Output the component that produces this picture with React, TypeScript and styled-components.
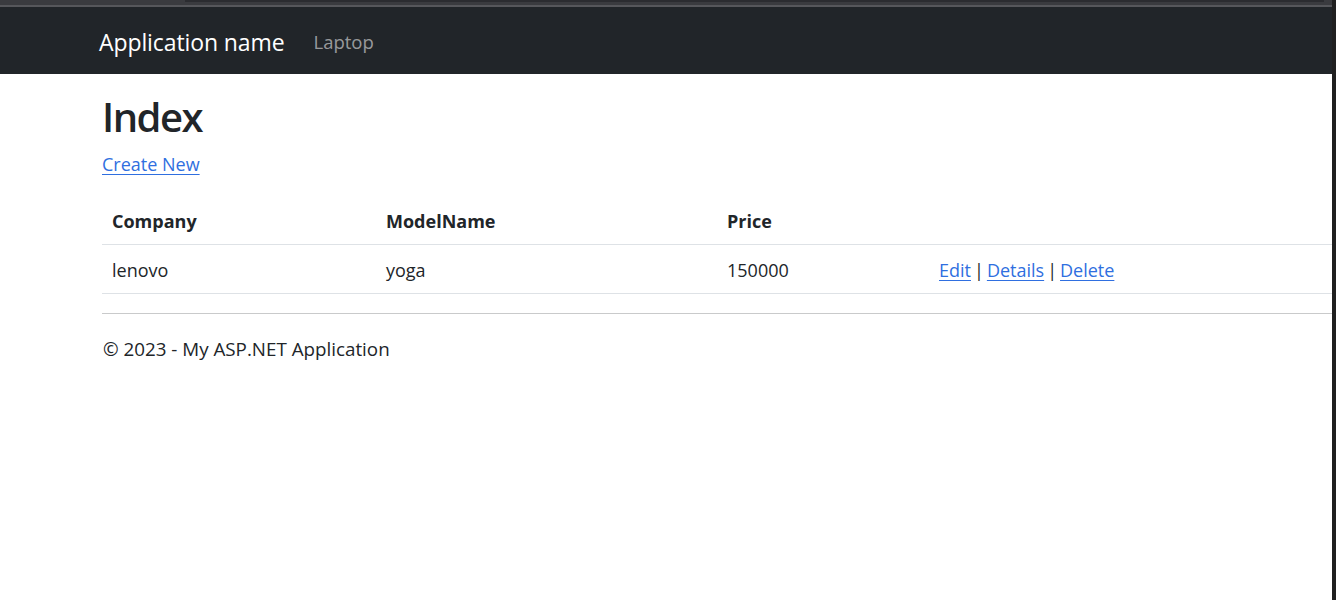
import React from "react";
import styled, { createGlobalStyle } from "styled-components";

const Global = createGlobalStyle`
  html, body { margin: 0; padding: 0; background: #ffffff; }
  body { font-family: "Open Sans", "Noto Sans", Arial, sans-serif; color: #212529; }
  * { box-sizing: border-box; }
`;

const Shell = styled.div`
  display: flex;
  width: 1336px;
  height: 600px;
  overflow: hidden;
`;

const Window = styled.div`
  flex: 1;
  display: flex;
  flex-direction: column;
  background: #ffffff;
`;

const ScrollStrip = styled.div`
  width: 4px;
  background: #202020;
  flex: none;
`;

const BrowserEdge = styled.div`
  height: 7px;
  background: #3a3b3f;
  border-bottom: 2px solid #56575b;
  position: relative;
  &::after {
    content: "";
    position: absolute;
    left: 185px;
    right: 8px;
    top: 0;
    height: 2px;
    background: #2b2c30;
  }
`;

const Navbar = styled.nav`
  height: 67px;
  background: #212529;
  display: flex;
  align-items: center;
  padding-left: 99px;
  padding-top: 2px;
  gap: 29px;
`;

const Brand = styled.a`
  font-size: 23px;
  color: #ffffff;
  text-decoration: none;
  line-height: 1;
  letter-spacing: -0.1px;
  padding-top: 1px;
`;

const NavLink = styled.a`
  font-size: 18.5px;
  color: rgba(255, 255, 255, 0.55);
  text-decoration: none;
  line-height: 1;
  padding-top: 2px;
`;

const Main = styled.main`
  padding-left: 102px;
  display: flex;
  flex-direction: column;
`;

const Title = styled.h1`
  margin: 15px 0 0;
  font-size: 40px;
  font-weight: 600;
  line-height: 56px;
  letter-spacing: -1.5px;
`;

const Para = styled.p`
  margin: 5px 0 17px;
  font-size: 18px;
  line-height: 28px;
`;

const Link = styled.a`
  color: #2f6fe0;
  text-decoration: underline;
  text-underline-offset: 3px;
`;

const Table = styled.table`
  border-collapse: collapse;
  width: 100%;
  font-size: 18px;
`;

const Th = styled.th<{ $w?: number }>`
  text-align: left;
  font-weight: 700;
  height: 49px;
  padding: 3px 10px 0;
  border-bottom: 1px solid #dee2e6;
  width: ${(p) => (p.$w ? `${p.$w}px` : "auto")};
`;

const Td = styled.td`
  height: 49px;
  padding: 2px 10px 0;
  border-bottom: 1px solid #dee2e6;
`;

const Sep = styled.span`
  color: #212529;
  margin: 0 3px;
`;

const Rule = styled.hr`
  border: 0;
  border-top: 1px solid #c9cacb;
  margin: 19px 0 0;
`;

const Footer = styled.footer`
  padding-top: 21px;
  font-size: 18.8px;
  line-height: 28px;
  padding-left: 1px;
`;

export default function App() {
  return (
    <Shell>
      <Global />
      <Window>
        <BrowserEdge />
        <Navbar>
          <Brand href="#">Application name</Brand>
          <NavLink href="#">Laptop</NavLink>
        </Navbar>
        <Main>
          <Title>Index</Title>
          <Para>
            <Link href="#">Create New</Link>
          </Para>
          <Table>
            <thead>
              <tr>
                <Th $w={274}>Company</Th>
                <Th $w={341}>ModelName</Th>
                <Th $w={212}>Price</Th>
                <Th></Th>
              </tr>
            </thead>
            <tbody>
              <tr>
                <Td>lenovo</Td>
                <Td>yoga</Td>
                <Td>150000</Td>
                <Td>
                  <Link href="#">Edit</Link>
                  <Sep>|</Sep>
                  <Link href="#">Details</Link>
                  <Sep>|</Sep>
                  <Link href="#">Delete</Link>
                </Td>
              </tr>
            </tbody>
          </Table>
          <Rule />
          <Footer>© 2023 - My ASP.NET Application</Footer>
        </Main>
      </Window>
      <ScrollStrip />
    </Shell>
  );
}
